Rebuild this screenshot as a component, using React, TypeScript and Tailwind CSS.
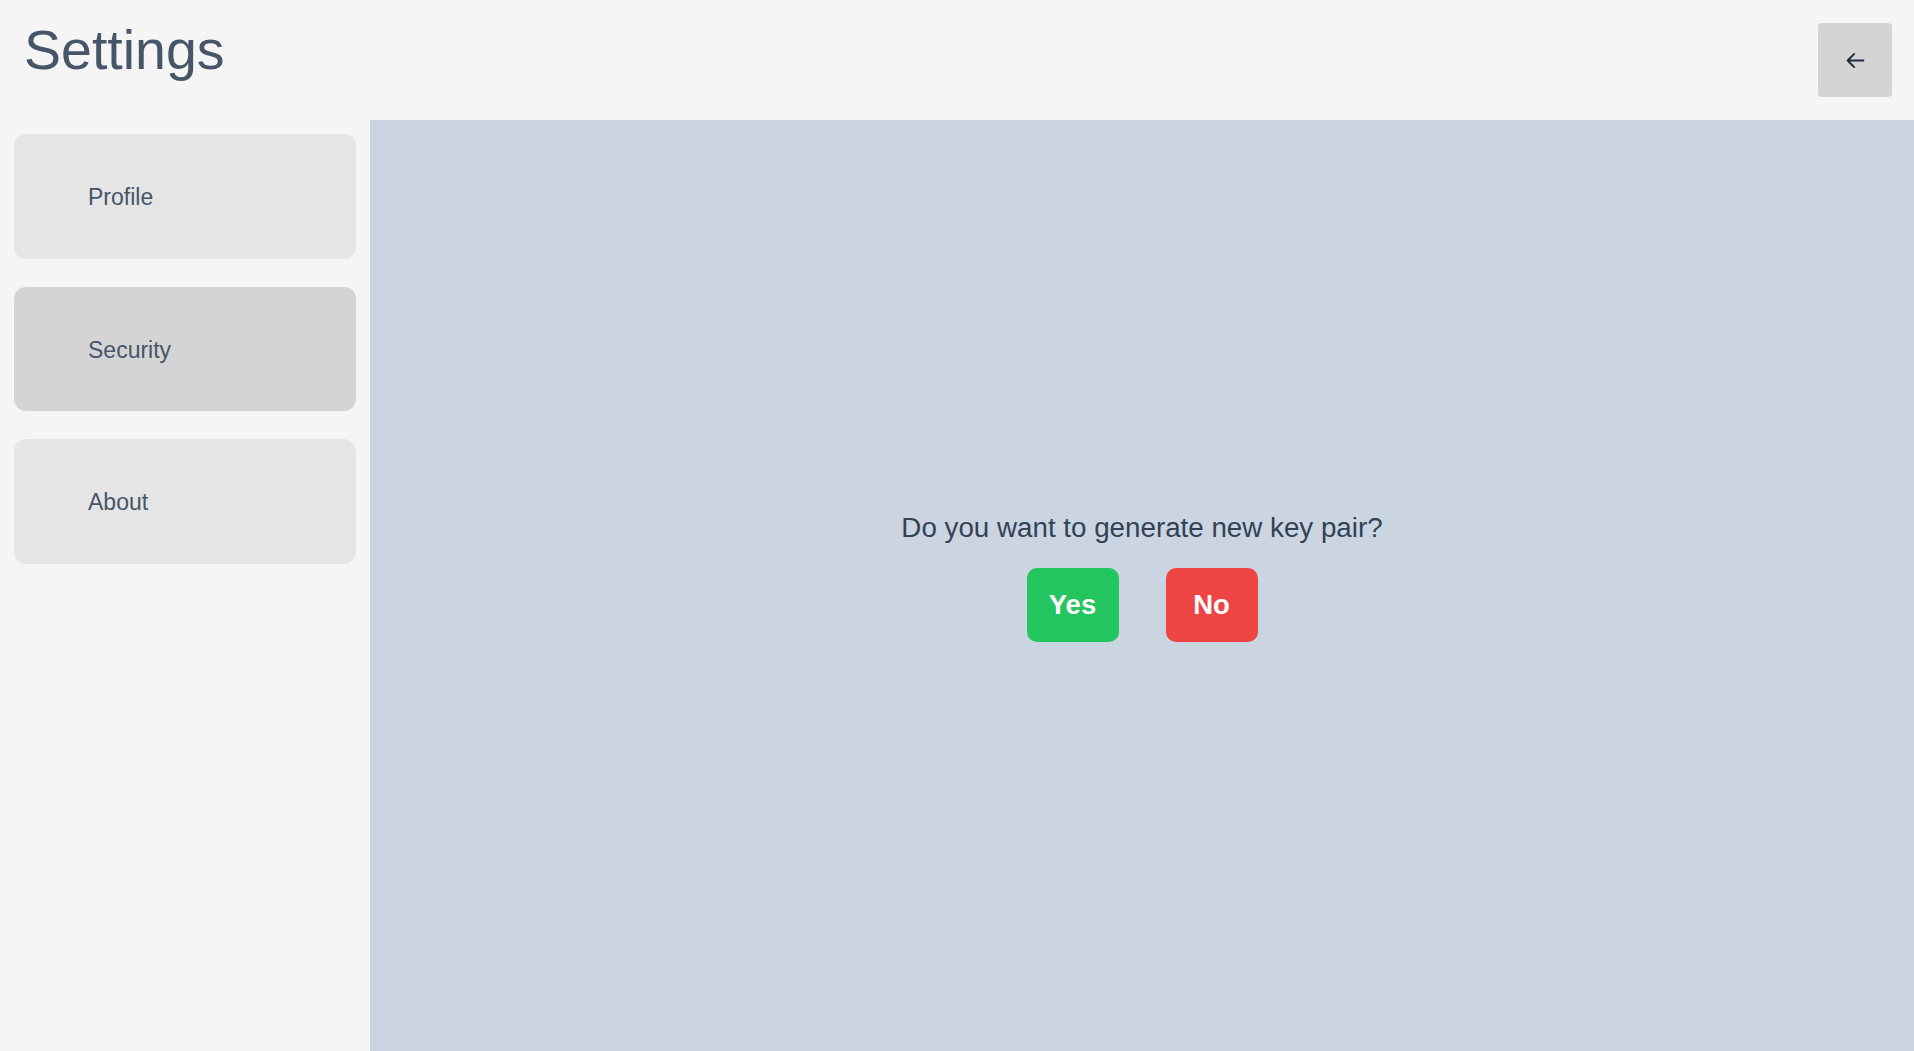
import { useState } from 'react';

const tabs = ['Profile', 'Security', 'About'];

export default function App() {
  const [active, setActive] = useState('Security');

  return (
    <div className="h-screen flex flex-col bg-[#f5f5f5] font-['Liberation_Sans',Arial,sans-serif] overflow-hidden">
      <header className="h-[120px] shrink-0 flex justify-between items-start pl-[24px] pr-[22px] pt-[23px]">
        <h1 className="text-[55.5px] leading-none text-[#475569]">Settings</h1>
        <button className="w-[74px] h-[74px] rounded bg-[#d4d4d4] flex items-center justify-center">
          <svg width="21" height="21" viewBox="0 0 24 24" fill="none" stroke="#1e293b" strokeWidth="2.2" strokeLinecap="round" strokeLinejoin="round">
            <path d="M10.5 19.5 3 12m0 0 7.5-7.5M3 12h18" />
          </svg>
        </button>
      </header>
      <div className="flex flex-1 min-h-0">
        <aside className="w-[370px] shrink-0 px-[14px] pt-[14px] flex flex-col gap-[28px]">
          {tabs.map(t => (
            <button
              key={t}
              onClick={() => setActive(t)}
              className={
                active === t
                  ? 'h-[124.5px] rounded-xl bg-[#d4d4d4] pl-[74px] pt-[2px] flex items-center text-[23px] text-[#475569]'
                  : 'h-[124.5px] rounded-xl bg-[#e5e5e5] pl-[74px] pt-[2px] flex items-center text-[23px] text-[#475569]'
              }
            >
              {t}
            </button>
          ))}
        </aside>
        <main className="flex-1 bg-[#cbd5e1] flex flex-col items-center justify-center pb-[22px]">
          <p className="text-[27.75px] text-[#334155]">Do you want to generate new key pair?</p>
          <div className="mt-[19px] flex gap-[47px]">
            <button className="w-[92px] h-[74px] rounded-[10px] bg-[#22c55e] text-white font-bold text-[27.5px]">Yes</button>
            <button className="w-[92px] h-[74px] rounded-[10px] bg-[#ef4444] text-white font-bold text-[27.5px]">No</button>
          </div>
        </main>
      </div>
    </div>
  );
}
